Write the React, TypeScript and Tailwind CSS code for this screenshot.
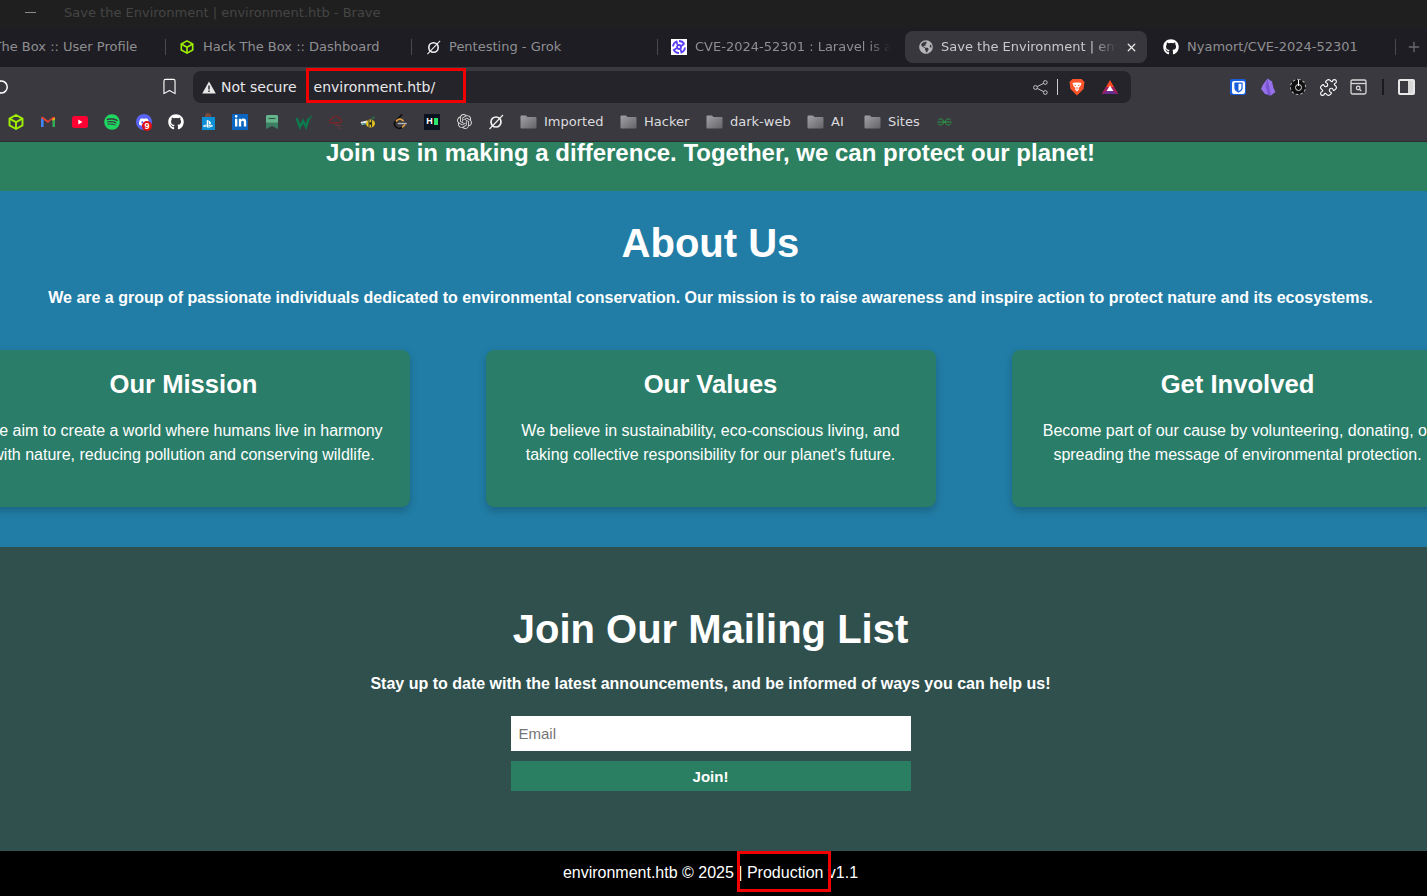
import React from "react";
import { Bookmark, Plus, Puzzle, X } from "lucide-react";
import { FaGithub, FaGlobeAmericas, FaLinkedinIn, FaPlaystation, FaSpotify } from "react-icons/fa";
import { SiBitwarden, SiDiscord, SiOpenai } from "react-icons/si";

const HtbIcon = ({ size = 16 }: { size?: number }) => (
  <svg width={size} height={size} viewBox="0 0 16 16" fill="none" stroke="#9fef00" strokeWidth="1.9" strokeLinejoin="round">
    <path d="M8 1 L14.5 4.6 V11.4 L8 15 L1.5 11.4 V4.6 Z" />
    <path d="M1.5 4.6 L8 8.2 L14.5 4.6 M8 8.2 V15" />
  </svg>
);

const GrokIcon = ({ size = 16 }: { size?: number }) => (
  <svg width={size} height={size} viewBox="0 0 16 16" fill="none" stroke="#f2f2f2" strokeWidth="1.7">
    <circle cx="8" cy="8" r="5" />
    <path d="M1.5 15 L15 1" strokeWidth="1.1" />
  </svg>
);

const Gmail = () => (
  <svg width="16" height="16" viewBox="0 0 16 16" fill="none">
    <path d="M1 13 V4 L3.6 5.6 V13 Z" fill="#4285f4" />
    <path d="M15 13 V4 L12.4 5.6 V13 Z" fill="#34a853" />
    <path d="M1 4 Q1.6 2.2 3.2 3 L8 6.8 L12.8 3 Q14.4 2.2 15 4 L12.4 6 V4.8 L8 9 L3.6 5.8 Z" fill="#ea4335" />
    <path d="M12.4 5 L15 3.6 V5.2 L12.4 7 Z" fill="#fbbc04" />
  </svg>
);

const Youtube = () => (
  <svg width="16" height="12" viewBox="0 0 16 12">
    <rect x="0" y="0" width="16" height="12" rx="2.5" fill="#ff0033" />
    <path d="M6.3 3.6 L10.4 6 L6.3 8.4 Z" fill="#ffffff" />
  </svg>
);

const Discord = () => (
  <span className="relative block w-4 h-4">
    <span className="flex items-center justify-center w-4 h-4 rounded-full bg-[#5865f2]">
      <SiDiscord size={10} color="#ffffff" />
    </span>
    <span className="absolute left-[6px] top-[7px] w-[10px] h-[10px] rounded-full bg-[#e01010] text-white text-[9px] leading-[10px] text-center font-bold font-['Liberation_Sans',sans-serif]">9</span>
  </span>
);

const Playstation = () => (
  <span className="flex flex-col items-center w-4 h-[17px]">
    <span className="w-[6px] h-[4px] rounded-t-sm bg-[#7a4a3a]" />
    <span className="flex items-center justify-center w-[13px] h-[13px] bg-[#0c8fd6]">
      <FaPlaystation size={10} color="#ffffff" />
    </span>
  </span>
);

const Linkedin = () => (
  <span className="flex items-center justify-center w-4 h-4 bg-[#0a66c2] rounded-[1px]">
    <FaLinkedinIn size={13} color="#ffffff" />
  </span>
);

const Slab = () => (
  <svg width="16" height="16" viewBox="0 0 16 16">
    <path d="M2 2.5 Q2 1 3.5 1 H12.5 Q14 1 14 2.5 V15 L8 12 L2 15 Z" fill="#3d7f64" />
    <path d="M2 2.5 Q2 1 3.5 1 H12.5 Q14 1 14 2.5 V8.5 H2 Z" fill="#65b58d" />
    <path d="M4.5 4.5 H11.5" stroke="#2c5a46" strokeWidth="1.2" />
  </svg>
);

const WIcon = () => (
  <svg width="16" height="16" viewBox="0 0 16 16" fill="none">
    <path d="M0.5 4 L4 13 L7 7 L10 13 L13 4" stroke="#0b7a4e" strokeWidth="2.4" />
    <path d="M13.5 2 H15.5 L14 3.5 H15.5 L13.8 5" stroke="#0b7a4e" strokeWidth="0.7" />
  </svg>
);

const CloudIcon = () => (
  <svg width="18" height="18" viewBox="0 0 18 18" fill="none" stroke="#a01a1a" strokeWidth="1.1">
    <path d="M4 10 H12.5 C16 10 16 6 13 5.8 C12.6 3 9.5 1.6 7.6 3.6 C5.8 2.8 4.2 4 4.4 5.8 C1 6 1 10 4 10 Z" />
    <path d="M8 10 L11 13 H15 M7 13 H11 L13 16 H16" stroke="#6e3a3e" strokeWidth="0.8" />
  </svg>
);

const BeeIcon = () => (
  <svg width="16" height="16" viewBox="0 0 16 16">
    <path d="M0.5 8 L7 6.5 L7 8.5 L2 11 Z" fill="#e6e6e6" />
    <path d="M1.5 9 H6 V10.5 H1.5 Z" fill="#58a6a6" />
    <ellipse cx="10.5" cy="9.5" rx="4.5" ry="4" fill="#e5c31e" />
    <path d="M9 6 V13 M11.6 6 V13" stroke="#333" strokeWidth="1" />
    <circle cx="10.5" cy="9.5" r="1.2" fill="#222" />
    <path d="M11 5 L15 3" stroke="#2e6b4e" strokeWidth="1.4" />
  </svg>
);

const LeetIcon = () => (
  <svg width="16" height="16" viewBox="0 0 16 16" fill="none" strokeWidth="1.7" strokeLinecap="round">
    <path d="M9.5 1 L3 8 C1.8 9.8 2.4 11.6 4 13 C5.6 14.6 8.5 14.8 10.5 13.2" stroke="#0d0d0d" />
    <path d="M4.5 6.8 C6.4 4.8 9 4.8 11 6.6" stroke="#e8a13c" />
    <path d="M10.6 13 L12.6 11" stroke="#e8a13c" />
    <path d="M6.5 9.5 H14" stroke="#b5b5b5" />
  </svg>
);

const HtbBlack = () => (
  <span className="flex items-center justify-center gap-px w-4 h-4 bg-[#0b121f]">
    <span className="text-white text-[9px] leading-none font-bold font-['Liberation_Sans',sans-serif]">H</span>
    <span className="w-[4px] h-[7px] bg-[#2ee66b]" />
  </span>
);

const Gfg = () => (
  <svg width="15" height="8" viewBox="0 0 15 8" fill="none" stroke="#2a9d47" strokeWidth="1">
    <path d="M0.5 4 H14.5" />
    <path d="M1.5 1.8 C2.6 0.2 6 0.4 7 4 C6.4 7.4 2.4 7.8 1 5.6" />
    <path d="M13.5 1.8 C12.4 0.2 9 0.4 8 4 C8.6 7.4 12.6 7.8 14 5.6" />
  </svg>
);

const Folder = () => (
  <svg width="17" height="14" viewBox="0 0 17 14">
    <defs>
      <linearGradient id="folderFill" x1="0" y1="0" x2="1" y2="1">
        <stop offset="0" stopColor="#a2a2a6" />
        <stop offset="1" stopColor="#636368" />
      </linearGradient>
    </defs>
    <path d="M0.5 1.5 Q0.5 0.5 1.5 0.5 H6 L7.5 2 H15.5 Q16.5 2 16.5 3 V12.5 Q16.5 13.5 15.5 13.5 H1.5 Q0.5 13.5 0.5 12.5 Z" fill="url(#folderFill)" />
  </svg>
);

const Reload = () => (
  <svg width="16" height="16" viewBox="0 0 16 16" fill="none" stroke="#ffffff" strokeWidth="1.5">
    <path d="M2.4 3.4 A6 6 0 1 1 2.4 12.6" />
    <path d="M1 1.5 V5 H4.5" />
  </svg>
);

const CveIcon = () => (
  <span className="flex items-center justify-center w-4 h-4 bg-white shrink-0">
    <svg width="14" height="14" viewBox="0 0 14 14" fill="none" stroke="#5b3df5" strokeWidth="1.8">
      <path d="M7 1 A6 6 0 0 1 12.2 4 M12.2 4 L9.2 6 M13 7.5 A6 6 0 0 1 9.5 12.5 L8.5 9.2 M7 13 A6 6 0 0 1 1.8 10 L4.8 8 M1 6.5 A6 6 0 0 1 4.5 1.5 L5.5 4.8" />
      <circle cx="7" cy="7" r="2" />
    </svg>
  </span>
);

const Share = () => (
  <svg width="15" height="15" viewBox="0 0 15 15" fill="none" stroke="#c4c4c4" strokeWidth="1">
    <circle cx="2.5" cy="7.5" r="1.9" />
    <circle cx="12.3" cy="2.5" r="1.9" />
    <circle cx="12.3" cy="12.5" r="1.9" />
    <path d="M4.2 6.6 L10.6 3.4 M4.2 8.4 L10.6 11.6" />
  </svg>
);

const Brave = () => (
  <svg width="16" height="18" viewBox="0 0 16 18">
    <path d="M3.5 1 H12.5 L15.5 4 L14.5 11 L8 17.5 L1.5 11 L0.5 4 Z" fill="#fb542b" />
    <path d="M3.5 5 L6.5 4.5 H9.5 L12.5 5 L11.5 8 L9.5 10 L10 11.5 L8 13.5 L6 11.5 L6.5 10 L4.5 8 Z" fill="#ffffff" />
    <path d="M5.5 7 L7 7.6 M10.5 7 L9 7.6 M8 9 V11.5" stroke="#fb542b" strokeWidth="0.9" />
  </svg>
);

const Bat = () => (
  <svg width="18" height="16" viewBox="0 0 18 16">
    <path d="M9 1 L1 15 H17 Z" fill="#ff4724" />
    <path d="M1 15 L5 8 H13 L17 15 Z" fill="#9e1f63" />
    <path d="M1 15 L9 11 L17 15 Z" fill="#662d91" />
    <path d="M9 6.5 L5.6 12 H12.4 Z" fill="#ffffff" />
  </svg>
);

const Obsidian = () => (
  <svg width="16" height="18" viewBox="0 0 16 18">
    <path d="M7.5 0.5 L12 3.5 L13.5 10 L15.5 14 L11 17.5 L5 16 L1 11 L3 6.5 Z" fill="#9570e8" />
    <path d="M7.5 0.5 L5.5 8 L8 17 L11 17.5 L9 8 Z" fill="#7a55d4" />
  </svg>
);

const Wallet = () => (
  <span className="relative flex items-center justify-center w-4 h-4 rounded-full bg-[#111111] border border-dashed border-[#bbbbbb]">
    <span className="w-[7px] h-[7px] border border-[#dddddd] rounded-sm" />
    <span className="absolute top-0 w-px h-[6px] bg-white" />
  </span>
);

const Screenshot = () => (
  <svg width="17" height="16" viewBox="0 0 17 16" fill="none" stroke="#d8d8d8" strokeWidth="1.3">
    <rect x="1" y="1" width="15" height="14" rx="1.5" />
    <path d="M1 4.5 H16" />
    <circle cx="8.2" cy="9" r="1.8" />
    <path d="M9.6 10.4 L11.2 12" />
  </svg>
);

const SidePanel = () => (
  <span className="flex w-[17px] h-4 rounded-[2px] border-2 border-[#e8e8e8] overflow-hidden">
    <span className="flex-1 bg-[#3a393f]" />
    <span className="w-[5px] bg-[#d8d8d8]" />
  </span>
);

function Tab({ icon, title, width = "w-[246px]" }: { icon: React.ReactNode; title: string; width?: string }) {
  return (
    <div className={`flex items-center shrink-0 ${width} h-4 pl-[13px] pr-[14px] border-r border-[#4a4a4e]`}>
      <span className="shrink-0 w-4 flex justify-center">{icon}</span>
      <span className="ml-2 flex-1 overflow-hidden whitespace-nowrap text-[#8f8f92]">{title}</span>
    </div>
  );
}

function FolderMark({ label, width }: { label: string; width: string }) {
  return (
    <div className={`flex items-center gap-[7px] shrink-0 ${width}`}>
      <Folder />
      <span className="text-[#dcdcdf]">{label}</span>
    </div>
  );
}

function InfoCard({ title, lines, inset = "" }: { title: string; lines: string[]; inset?: string }) {
  return (
    <div className={`shrink-0 w-[450px] h-[157px] rounded-lg bg-[#2a7d69] shadow-[0_4px_8px_rgba(0,0,0,0.2)] pt-[18px] text-center ${inset}`}>
      <h3 className="text-[25.6px] leading-[33px] font-bold">{title}</h3>
      <div className="mt-[18px] whitespace-nowrap">
        {lines.map((line) => (
          <p key={line} className="text-base leading-6">{line}</p>
        ))}
      </div>
    </div>
  );
}

export default function App() {
  const bookmarks: React.ReactNode[] = [
    <HtbIcon key="1" />, <Gmail key="2" />, <Youtube key="3" />, <FaSpotify key="4" size={16} color="#1ed760" />,
    <Discord key="5" />, <FaGithub key="6" size={16} color="#ffffff" />, <Playstation key="7" />, <Linkedin key="8" />,
    <Slab key="9" />, <WIcon key="10" />, <CloudIcon key="11" />, <BeeIcon key="12" />,
    <LeetIcon key="13" />, <HtbBlack key="14" />, <SiOpenai key="15" size={15} color="#d8d8d8" />, <GrokIcon key="16" />,
  ];

  return (
    <div className="w-full h-[896px] overflow-hidden flex flex-col bg-black font-['Liberation_Sans',Arial,sans-serif] text-white">
      <div className="h-[142px] shrink-0 flex flex-col font-['DejaVu_Sans',sans-serif] text-[13px]">
        <div className="h-[28px] shrink-0 bg-[#1f1f1f] flex items-center pl-[25px] pb-[3px]">
          <span className="w-[11px] h-px bg-[#8a8a8a]" />
          <span className="ml-[28px] text-[#454545]">Save the Environment | environment.htb - Brave</span>
        </div>
        <div className="h-[39px] shrink-0 bg-[#1e1d23] flex items-start pt-[3px] overflow-hidden">
          <div className="flex items-center h-8 ml-[-80px]">
            <Tab icon={<HtbIcon size={14} />} title="Hack The Box :: User Profile" />
            <Tab icon={<HtbIcon size={14} />} title="Hack The Box :: Dashboard" />
            <Tab icon={<GrokIcon size={15} />} title="Pentesting - Grok" />
            <div className="w-[247px] shrink-0 flex items-center pl-[13px] pr-[14px]">
              <CveIcon />
              <span className="ml-2 flex-1 whitespace-nowrap overflow-hidden text-[#8f8f92] [mask-image:linear-gradient(to_right,black_88%,transparent)]">CVE-2024-52301 : Laravel is a</span>
            </div>
            <div className="flex items-center shrink-0 w-[242px] h-8 pl-[13px] pr-[9px] rounded-lg bg-[#38373d] mr-[3px]">
              <span className="shrink-0 w-4 flex justify-center"><FaGlobeAmericas size={14} color="#b5b5b8" /></span>
              <span className="ml-[7px] flex-1 overflow-hidden whitespace-nowrap text-[#c9c9cc] [mask-image:linear-gradient(to_right,black_85%,transparent)]">Save the Environment | environment.htb</span>
              <X size={13} strokeWidth={2.4} color="#e8e8e8" className="shrink-0 ml-2" />
            </div>
            <Tab icon={<FaGithub size={16} color="#ffffff" />} title="Nyamort/CVE-2024-52301" />
            <Plus size={16} color="#6a6a6e" strokeWidth={2} className="ml-[10px] shrink-0" />
          </div>
        </div>
        <div className="h-[36px] shrink-0 bg-[#3a393f] flex items-start pt-[4px] relative">
          <span className="ml-[-8px] mt-2 shrink-0 translate-x-[3px]"><Reload /></span>
          <Bookmark size={19} color="#ffffff" strokeWidth={1.4} className="ml-[152px] mt-[6px] shrink-0" />
          <div className="ml-[14px] w-[938px] h-8 shrink-0 rounded-lg bg-[#25242a] flex items-center pl-[9px] pr-[12px]">
            <svg width="14" height="13" viewBox="0 0 14 13"><path d="M7 0.5 L13.8 12.5 H0.2 Z" fill="#e8e8e8" /><path d="M6.3 4.5 H7.7 V8.5 H6.3 Z M6.3 9.5 H7.7 V11 H6.3 Z" fill="#25242a" /></svg>
            <span className="ml-[5px] text-[14px] text-[#e8e8ea]">Not secure</span>
            <span className="ml-[17px] text-[14px] text-[#e8e8ea]">environment.htb/</span>
            <span className="flex-1" />
            <Share />
            <span className="ml-[9px] w-px h-4 bg-[#cccccc]" />
            <span className="ml-[11px]"><Brave /></span>
            <span className="ml-[16px]"><Bat /></span>
          </div>
          <div className="flex items-center h-8 ml-[99px]">
            <span className="flex items-center justify-center w-4 h-4 rounded-[2px] bg-[#175ddc]"><SiBitwarden size={13} color="#ffffff" /></span>
            <span className="ml-[14px]"><Obsidian /></span>
            <span className="ml-[14px]"><Wallet /></span>
            <Puzzle size={19} color="#ffffff" strokeWidth={1.4} className="ml-[13px]" />
            <span className="ml-[12px]"><Screenshot /></span>
            <span className="ml-[15px] w-[2px] h-[16px] bg-[#1b1b1f]" />
            <span className="ml-[14px]"><SidePanel /></span>
          </div>
          <div className="absolute left-[306px] top-[1px] w-[160px] h-[35px] border-[3px] border-[#f00000]" />
        </div>
        <div className="h-[39px] shrink-0 bg-[#3a393f] flex items-center pl-2 border-b border-[#2c2b30] pb-[1px]">
          <div className="flex items-center gap-4">
            {bookmarks.map((icon, i) => (
              <span key={i} className="w-4 h-4 flex items-center justify-center">{icon}</span>
            ))}
          </div>
          <div className="flex items-center ml-4">
            <FolderMark label="Imported" width="w-[100px]" />
            <FolderMark label="Hacker" width="w-[86px]" />
            <FolderMark label="dark-web" width="w-[101px]" />
            <FolderMark label="AI" width="w-[57px]" />
            <FolderMark label="Sites" width="w-[73px]" />
            <Gfg />
          </div>
        </div>
      </div>

      <div className="h-[49px] shrink-0 bg-[#2c7f5f] pr-[6px] text-center overflow-hidden">
        <p className="text-2xl leading-[22px] font-bold whitespace-nowrap">Join us in making a difference. Together, we can protect our planet!</p>
      </div>

      <section className="h-[356px] shrink-0 bg-[#217da6] pr-[6px] pt-[25px] text-center">
        <h2 className="text-[40px] leading-[54px] font-bold">About Us</h2>
        <p className="mt-4 text-base leading-6 font-bold whitespace-nowrap">We are a group of passionate individuals dedicated to environmental conservation. Our mission is to raise awareness and inspire action to protect nature and its ecosystems.</p>
        <div className="mt-10 flex justify-center gap-[76px]">
          <InfoCard inset="pr-[2px]" title="Our Mission" lines={["We aim to create a world where humans live in harmony", "with nature, reducing pollution and conserving wildlife."]} />
          <InfoCard title="Our Values" lines={["We believe in sustainability, eco-conscious living, and", "taking collective responsibility for our planet's future."]} />
          <InfoCard inset="pl-[2px]" title="Get Involved" lines={["Become part of our cause by volunteering, donating, or", "spreading the message of environmental protection."]} />
        </div>
      </section>

      <section className="h-[304px] shrink-0 bg-[#30504e] pr-[6px] pt-[55px] flex flex-col items-center">
        <h2 className="text-[40px] leading-[54px] font-bold">Join Our Mailing List</h2>
        <p className="mt-4 text-base leading-6 font-bold">Stay up to date with the latest announcements, and be informed of ways you can help us!</p>
        <input placeholder="Email" className="mt-5 w-[400px] h-[35px] px-2 bg-white text-[15px] text-black placeholder:text-[#757575] outline-none" />
        <button className="mt-[10px] w-[400px] h-[30px] pt-[2px] bg-[#2a7f62] text-[15px] font-bold text-white">Join!</button>
      </section>

      <footer className="relative h-[45px] shrink-0 bg-black pr-[6px] text-center text-base leading-[44px]">
        environment.htb © 2025 | Production v1.1
        <div className="absolute left-[737px] top-0 w-[94px] h-[41px] border-[3px] border-[#f00000]" />
      </footer>
    </div>
  );
}
